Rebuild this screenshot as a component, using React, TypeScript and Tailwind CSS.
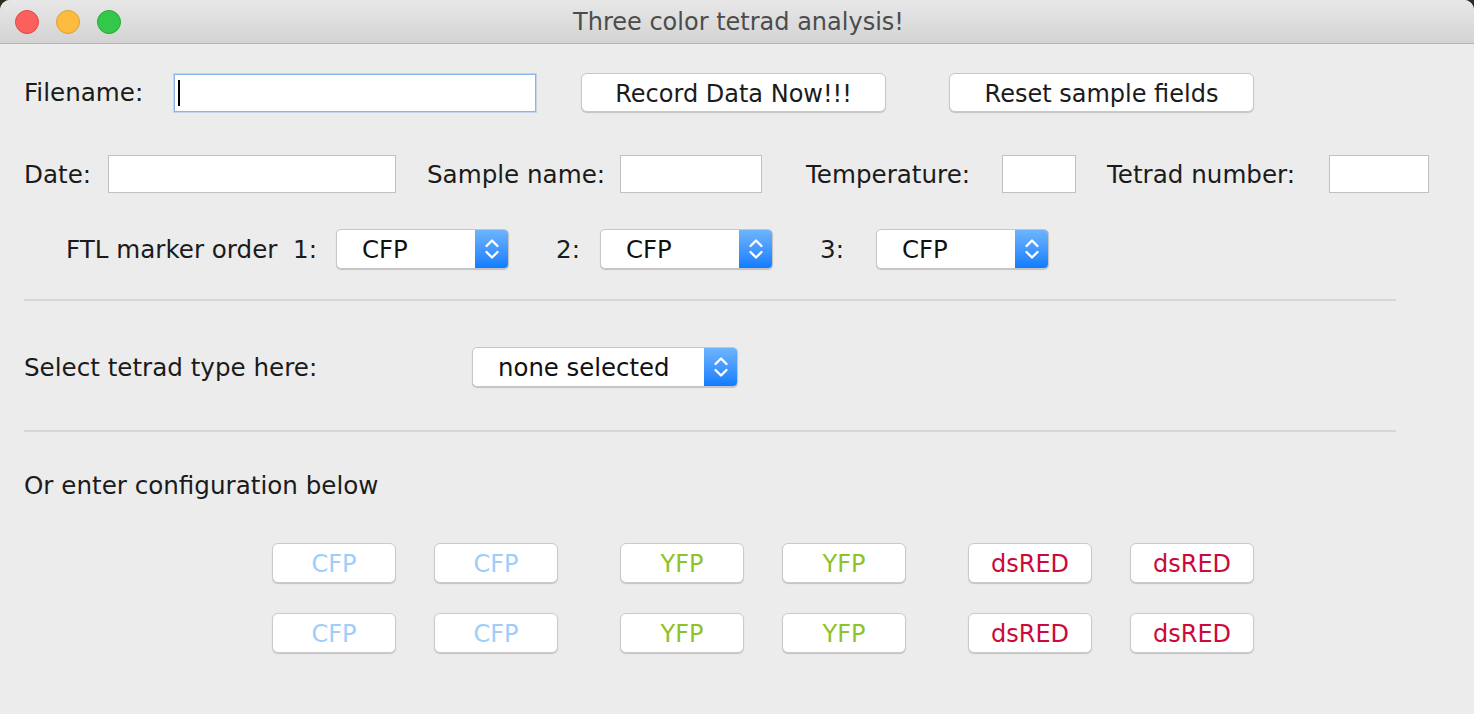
import type { ReactNode } from "react";

const font = { fontFamily: '"DejaVu Sans", "Liberation Sans", sans-serif' };

function Label({ w, children }: { w: string; children: ReactNode }) {
  return <span className={`${w} shrink-0 whitespace-pre pt-[2px] text-[24.6px] text-[#1b1b1b]`}>{children}</span>;
}

function TextBox({ w }: { w: string }) {
  return <div className={`${w} h-[38px] shrink-0 bg-white border border-[#c0c0c0]`} />;
}

function PushButton({ w, children }: { w: string; children: ReactNode }) {
  return (
    <button
      type="button"
      className={`${w} h-[39px] shrink-0 pt-[2px] rounded-[6px] bg-white border border-[#c8c8c8] shadow-[0_1px_1px_rgba(0,0,0,0.18)] text-[24px] text-[#1b1b1b] leading-none`}
    >
      {children}
    </button>
  );
}

function Combo({ w, value }: { w: string; value: string }) {
  return (
    <div
      className={`${w} h-[40px] shrink-0 flex rounded-[5px] bg-white border border-[#c6c6c6] shadow-[0_1px_1px_rgba(0,0,0,0.18)] overflow-hidden`}
    >
      <span className="flex-1 flex items-center pl-[25px] pt-[2px] text-[24.4px] text-[#111]">{value}</span>
      <span className="w-[33px] flex items-center justify-center bg-gradient-to-b from-[#6db4fb] to-[#0b7cff]">
        <svg width="18" height="28" viewBox="0 0 18 28" fill="none" stroke="white" strokeWidth="2.3" strokeLinecap="round" strokeLinejoin="round">
          <path d="M3.5 11 L9 5.5 L14.5 11" />
          <path d="M3.5 17 L9 22.5 L14.5 17" />
        </svg>
      </span>
    </div>
  );
}

function Tag({ color, children }: { color: string; children: ReactNode }) {
  return (
    <button
      type="button"
      className={`w-[124px] h-[40px] shrink-0 pt-[2px] rounded-[6px] bg-white border border-[#cacaca] shadow-[0_1px_1px_rgba(0,0,0,0.18)] text-[24px] leading-none ${color}`}
    >
      {children}
    </button>
  );
}

function TagRow() {
  return (
    <div className="flex items-center pl-[272px]">
      <Tag color="text-[#9fcdfa]">CFP</Tag>
      <div className="w-[38px] shrink-0" />
      <Tag color="text-[#9fcdfa]">CFP</Tag>
      <div className="w-[62px] shrink-0" />
      <Tag color="text-[#8dc22b]">YFP</Tag>
      <div className="w-[38px] shrink-0" />
      <Tag color="text-[#8dc22b]">YFP</Tag>
      <div className="w-[62px] shrink-0" />
      <Tag color="text-[#cc0a3a]">dsRED</Tag>
      <div className="w-[38px] shrink-0" />
      <Tag color="text-[#cc0a3a]">dsRED</Tag>
    </div>
  );
}

export default function App() {
  return (
    <div className="w-[1474px] h-[714px] bg-[#2e2d22] overflow-hidden" style={font}>
      <div className="w-full h-full bg-[#ececec] rounded-t-[10px] flex flex-col">
        {/* title bar */}
        <div className="h-[44px] shrink-0 flex items-center border-b border-[#b3b3b3] bg-gradient-to-b from-[#e9e8e9] to-[#d4d3d4] rounded-t-[10px]">
          <div className="flex items-center gap-[17px] pl-[15px]">
            <span className="w-[24px] h-[24px] rounded-full bg-[#fc605c] border border-[#de4843]" />
            <span className="w-[24px] h-[24px] rounded-full bg-[#fdbc40] border border-[#dea034]" />
            <span className="w-[24px] h-[24px] rounded-full bg-[#34c84a] border border-[#25a834]" />
          </div>
          <span className="flex-1 text-center text-[24px] text-[#4c4c4c] pr-[118px]">Three color tetrad analysis!</span>
        </div>

        {/* filename row */}
        <div className="mt-[29px] h-[39px] flex items-center pl-[24px]">
          <Label w="w-[150px]">Filename:</Label>
          <div className="w-[362px] h-[38px] shrink-0 bg-white border border-[#8ab4ea] shadow-[0_0_0_1px_rgba(120,170,235,0.35)] flex items-center pl-[3px]">
            <span className="w-[2px] h-[26px] bg-black" />
          </div>
          <div className="w-[45px] shrink-0" />
          <PushButton w="w-[305px]">Record Data Now!!!</PushButton>
          <div className="w-[63px] shrink-0" />
          <PushButton w="w-[305px]">Reset sample fields</PushButton>
        </div>

        {/* sample row */}
        <div className="mt-[43px] h-[38px] flex items-center pl-[24px]">
          <Label w="w-[84px]">Date:</Label>
          <TextBox w="w-[288px]" />
          <div className="w-[31px] shrink-0" />
          <Label w="w-[193px]">Sample name:</Label>
          <TextBox w="w-[142px]" />
          <div className="w-[44px] shrink-0" />
          <Label w="w-[196px]">Temperature:</Label>
          <TextBox w="w-[74px]" />
          <div className="w-[31px] shrink-0" />
          <Label w="w-[222px]">Tetrad number:</Label>
          <TextBox w="w-[100px]" />
        </div>

        {/* marker order row */}
        <div className="mt-[36px] h-[40px] flex items-center pl-[66px]">
          <Label w="w-[270px]">FTL marker order  1:</Label>
          <Combo w="w-[173px]" value="CFP" />
          <div className="w-[47px] shrink-0" />
          <Label w="w-[44px]">2:</Label>
          <Combo w="w-[173px]" value="CFP" />
          <div className="w-[47px] shrink-0" />
          <Label w="w-[56px]">3:</Label>
          <Combo w="w-[173px]" value="CFP" />
        </div>

        <div className="mt-[30px] ml-[24px] w-[1372px] h-[2px] bg-[#d6d6d6]" />

        {/* tetrad type */}
        <div className="mt-[46px] h-[40px] flex items-center pl-[24px]">
          <Label w="w-[448px]">Select tetrad type here:</Label>
          <Combo w="w-[266px]" value="none selected" />
        </div>

        <div className="mt-[43px] ml-[24px] w-[1372px] h-[2px] bg-[#d6d6d6]" />

        <div className="mt-[38px] h-[30px] flex items-center pl-[24px]">
          <Label w="w-auto">Or enter configuration below</Label>
        </div>

        <div className="mt-[43px]">
          <TagRow />
        </div>
        <div className="mt-[30px]">
          <TagRow />
        </div>
      </div>
    </div>
  );
}
